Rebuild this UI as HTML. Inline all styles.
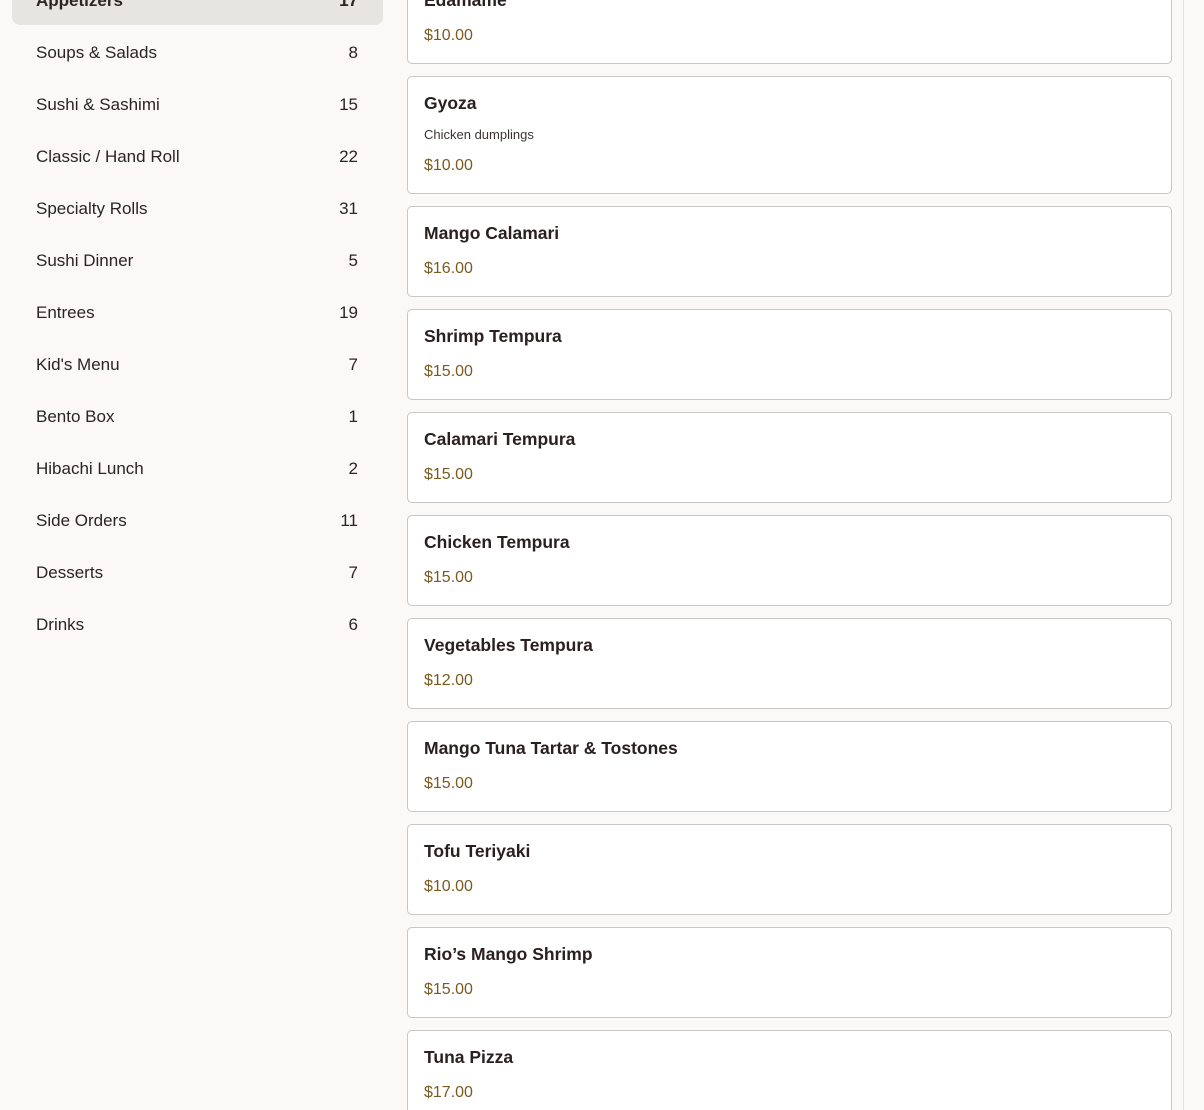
<!DOCTYPE html>
<html><head><style>
html,body{margin:0;padding:0;width:1204px;height:1110px;overflow:hidden;background:#faf9f7;font-family:"Liberation Sans",sans-serif;position:relative}
.cat{position:absolute;left:36px;width:322px;font-size:17px;color:#2b2422;line-height:20px}
.cat span{float:right}
.act{position:absolute;left:12px;top:-30px;width:371px;height:55px;background:#e6e5e2;border-radius:8px}
.card{position:absolute;left:407px;width:765px;background:#fff;border:1px solid #c9c7c5;border-radius:5px;box-sizing:border-box}
.t{position:absolute;left:16px;top:16px;font-size:17.5px;font-weight:bold;color:#2b2020;line-height:20px;white-space:nowrap}
.d{position:absolute;left:16px;top:50px;font-size:13px;color:#3b3433;line-height:16px}
.p{position:absolute;left:16px;font-size:16px;color:#7a5a1f;line-height:18px}
.sb{position:absolute;left:1183px;top:0;width:1px;height:1110px;background:#e2e0de}
</style></head><body>
<div class="act"></div>
<div class="cat" style="top:-9px;font-weight:bold">Appetizers<span>17</span></div>
<div class="cat" style="top:43px">Soups &amp; Salads<span>8</span></div>
<div class="cat" style="top:95px">Sushi &amp; Sashimi<span>15</span></div>
<div class="cat" style="top:147px">Classic / Hand Roll<span>22</span></div>
<div class="cat" style="top:199px">Specialty Rolls<span>31</span></div>
<div class="cat" style="top:251px">Sushi Dinner<span>5</span></div>
<div class="cat" style="top:303px">Entrees<span>19</span></div>
<div class="cat" style="top:355px">Kid's Menu<span>7</span></div>
<div class="cat" style="top:407px">Bento Box<span>1</span></div>
<div class="cat" style="top:459px">Hibachi Lunch<span>2</span></div>
<div class="cat" style="top:511px">Side Orders<span>11</span></div>
<div class="cat" style="top:563px">Desserts<span>7</span></div>
<div class="cat" style="top:615px">Drinks<span>6</span></div>

<div class="card" style="top:-27px;height:91px"><div class="t">Edamame</div><div class="p" style="top:53px">$10.00</div></div>
<div class="card" style="top:76px;height:118px"><div class="t">Gyoza</div><div class="d">Chicken dumplings</div><div class="p" style="top:80px">$10.00</div></div>
<div class="card" style="top:206px;height:91px"><div class="t">Mango Calamari</div><div class="p" style="top:53px">$16.00</div></div>
<div class="card" style="top:309px;height:91px"><div class="t">Shrimp Tempura</div><div class="p" style="top:53px">$15.00</div></div>
<div class="card" style="top:412px;height:91px"><div class="t">Calamari Tempura</div><div class="p" style="top:53px">$15.00</div></div>
<div class="card" style="top:515px;height:91px"><div class="t">Chicken Tempura</div><div class="p" style="top:53px">$15.00</div></div>
<div class="card" style="top:618px;height:91px"><div class="t">Vegetables Tempura</div><div class="p" style="top:53px">$12.00</div></div>
<div class="card" style="top:721px;height:91px"><div class="t">Mango Tuna Tartar &amp; Tostones</div><div class="p" style="top:53px">$15.00</div></div>
<div class="card" style="top:824px;height:91px"><div class="t">Tofu Teriyaki</div><div class="p" style="top:53px">$10.00</div></div>
<div class="card" style="top:927px;height:91px"><div class="t">Rio’s Mango Shrimp</div><div class="p" style="top:53px">$15.00</div></div>
<div class="card" style="top:1030px;height:91px"><div class="t">Tuna Pizza</div><div class="p" style="top:53px">$17.00</div></div>
<div class="sb"></div>
</body></html>
